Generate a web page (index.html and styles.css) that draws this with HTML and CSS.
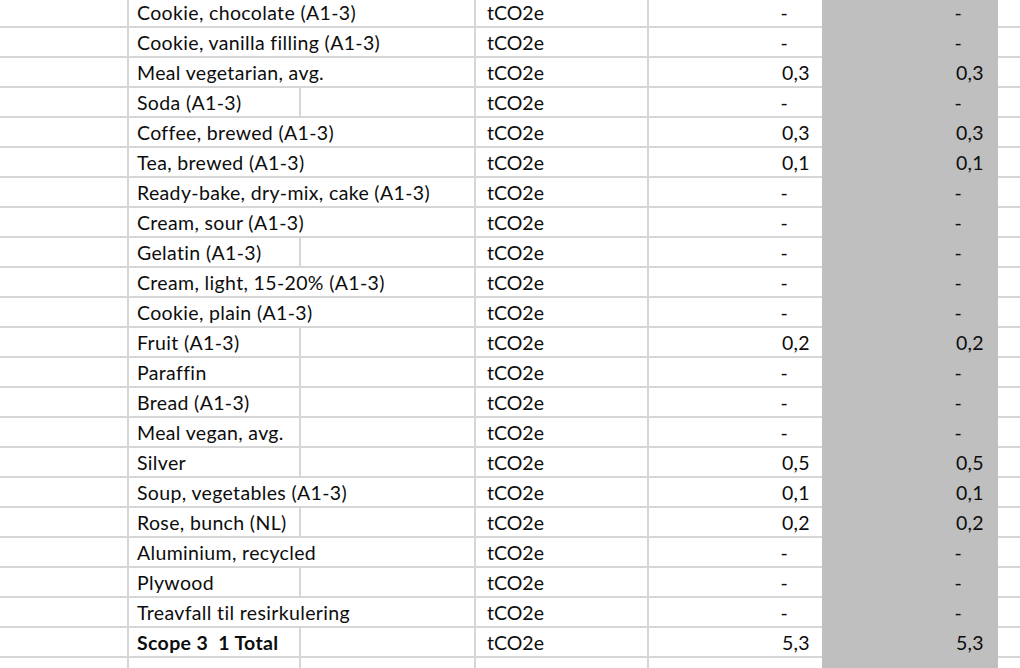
FILE: index.html
```html
<!DOCTYPE html>
<html>
<head>
<meta charset="utf-8">
<link rel="stylesheet" href="styles.css">
</head>
<body>
<div class="sheet">
  <div class="row"><div class="c a"></div><div class="c lbl span">Cookie, chocolate (A1-3)</div><div class="c u">tCO2e</div><div class="c n"><span class="dash">-</span></div><div class="c f"><span class="dash">-</span></div><div class="c g"></div></div>
  <div class="row"><div class="c a"></div><div class="c lbl span">Cookie, vanilla filling (A1-3)</div><div class="c u">tCO2e</div><div class="c n"><span class="dash">-</span></div><div class="c f"><span class="dash">-</span></div><div class="c g"></div></div>
  <div class="row"><div class="c a"></div><div class="c lbl span">Meal vegetarian, avg.</div><div class="c u">tCO2e</div><div class="c n">0,3</div><div class="c f">0,3</div><div class="c g"></div></div>
  <div class="row"><div class="c a"></div><div class="c lbl">Soda (A1-3)</div><div class="c e"></div><div class="c u">tCO2e</div><div class="c n"><span class="dash">-</span></div><div class="c f"><span class="dash">-</span></div><div class="c g"></div></div>
  <div class="row"><div class="c a"></div><div class="c lbl span">Coffee, brewed (A1-3)</div><div class="c u">tCO2e</div><div class="c n">0,3</div><div class="c f">0,3</div><div class="c g"></div></div>
  <div class="row"><div class="c a"></div><div class="c lbl span">Tea, brewed (A1-3)</div><div class="c u">tCO2e</div><div class="c n">0,1</div><div class="c f">0,1</div><div class="c g"></div></div>
  <div class="row"><div class="c a"></div><div class="c lbl span">Ready-bake, dry-mix, cake (A1-3)</div><div class="c u">tCO2e</div><div class="c n"><span class="dash">-</span></div><div class="c f"><span class="dash">-</span></div><div class="c g"></div></div>
  <div class="row"><div class="c a"></div><div class="c lbl span">Cream, sour (A1-3)</div><div class="c u">tCO2e</div><div class="c n"><span class="dash">-</span></div><div class="c f"><span class="dash">-</span></div><div class="c g"></div></div>
  <div class="row"><div class="c a"></div><div class="c lbl">Gelatin (A1-3)</div><div class="c e"></div><div class="c u">tCO2e</div><div class="c n"><span class="dash">-</span></div><div class="c f"><span class="dash">-</span></div><div class="c g"></div></div>
  <div class="row"><div class="c a"></div><div class="c lbl span">Cream, light, 15-20% (A1-3)</div><div class="c u">tCO2e</div><div class="c n"><span class="dash">-</span></div><div class="c f"><span class="dash">-</span></div><div class="c g"></div></div>
  <div class="row"><div class="c a"></div><div class="c lbl span">Cookie, plain (A1-3)</div><div class="c u">tCO2e</div><div class="c n"><span class="dash">-</span></div><div class="c f"><span class="dash">-</span></div><div class="c g"></div></div>
  <div class="row"><div class="c a"></div><div class="c lbl">Fruit (A1-3)</div><div class="c e"></div><div class="c u">tCO2e</div><div class="c n">0,2</div><div class="c f">0,2</div><div class="c g"></div></div>
  <div class="row"><div class="c a"></div><div class="c lbl">Paraffin</div><div class="c e"></div><div class="c u">tCO2e</div><div class="c n"><span class="dash">-</span></div><div class="c f"><span class="dash">-</span></div><div class="c g"></div></div>
  <div class="row"><div class="c a"></div><div class="c lbl">Bread (A1-3)</div><div class="c e"></div><div class="c u">tCO2e</div><div class="c n"><span class="dash">-</span></div><div class="c f"><span class="dash">-</span></div><div class="c g"></div></div>
  <div class="row"><div class="c a"></div><div class="c lbl">Meal vegan, avg.</div><div class="c e"></div><div class="c u">tCO2e</div><div class="c n"><span class="dash">-</span></div><div class="c f"><span class="dash">-</span></div><div class="c g"></div></div>
  <div class="row"><div class="c a"></div><div class="c lbl">Silver</div><div class="c e"></div><div class="c u">tCO2e</div><div class="c n">0,5</div><div class="c f">0,5</div><div class="c g"></div></div>
  <div class="row"><div class="c a"></div><div class="c lbl span">Soup, vegetables (A1-3)</div><div class="c u">tCO2e</div><div class="c n">0,1</div><div class="c f">0,1</div><div class="c g"></div></div>
  <div class="row"><div class="c a"></div><div class="c lbl">Rose, bunch (NL)</div><div class="c e"></div><div class="c u">tCO2e</div><div class="c n">0,2</div><div class="c f">0,2</div><div class="c g"></div></div>
  <div class="row"><div class="c a"></div><div class="c lbl span">Aluminium, recycled</div><div class="c u">tCO2e</div><div class="c n"><span class="dash">-</span></div><div class="c f"><span class="dash">-</span></div><div class="c g"></div></div>
  <div class="row"><div class="c a"></div><div class="c lbl">Plywood</div><div class="c e"></div><div class="c u">tCO2e</div><div class="c n"><span class="dash">-</span></div><div class="c f"><span class="dash">-</span></div><div class="c g"></div></div>
  <div class="row"><div class="c a"></div><div class="c lbl span">Treavfall til resirkulering</div><div class="c u">tCO2e</div><div class="c n"><span class="dash">-</span></div><div class="c f"><span class="dash">-</span></div><div class="c g"></div></div>
  <div class="row"><div class="c a"></div><div class="c lbl bold">Scope 3  1 Total</div><div class="c e"></div><div class="c u">tCO2e</div><div class="c n">5,3</div><div class="c f">5,3</div><div class="c g"></div></div>
  <div class="row"><div class="c a"></div><div class="c lbl"></div><div class="c e"></div><div class="c u"></div><div class="c n"></div><div class="c f"></div><div class="c g"></div></div>
</div>
</body>
</html>
```

FILE: styles.css
```css
html, body {
  margin: 0;
  padding: 0;
  background: #ffffff;
}
body {
  width: 1020px;
  height: 668px;
  overflow: hidden;
  font-family: "Lato", "Open Sans", sans-serif;
  font-size: 19.5px;
  letter-spacing: 0.35px;
  color: #0d0d0d;
}
.sheet {
  margin-top: -2px;
}
.row {
  display: grid;
  grid-template-columns: 129px 172px 175px 173px 173px 176px 1fr;
  height: 30px;
}
.c {
  box-sizing: border-box;
  height: 30px;
  border-bottom: 2px solid #d6d6d6;
  border-right: 2px solid #d6d6d6;
  white-space: pre;
  line-height: 28px;
  padding-top: 1px;
}
.lbl {
  padding-left: 8px;
}
.span {
  grid-column: span 2;
}
.u {
  padding-left: 11px;
  letter-spacing: 0;
}
.n {
  text-align: right;
  padding-right: 12px;
  border-right: none;
}
.f {
  background: #bfbfbf;
  border: none;
  text-align: right;
  padding-right: 14px;
}
.g {
  border-right: none;
}
.dash {
  display: inline-block;
  margin-right: 22px;
}
.bold {
  font-weight: bold;
}
```
